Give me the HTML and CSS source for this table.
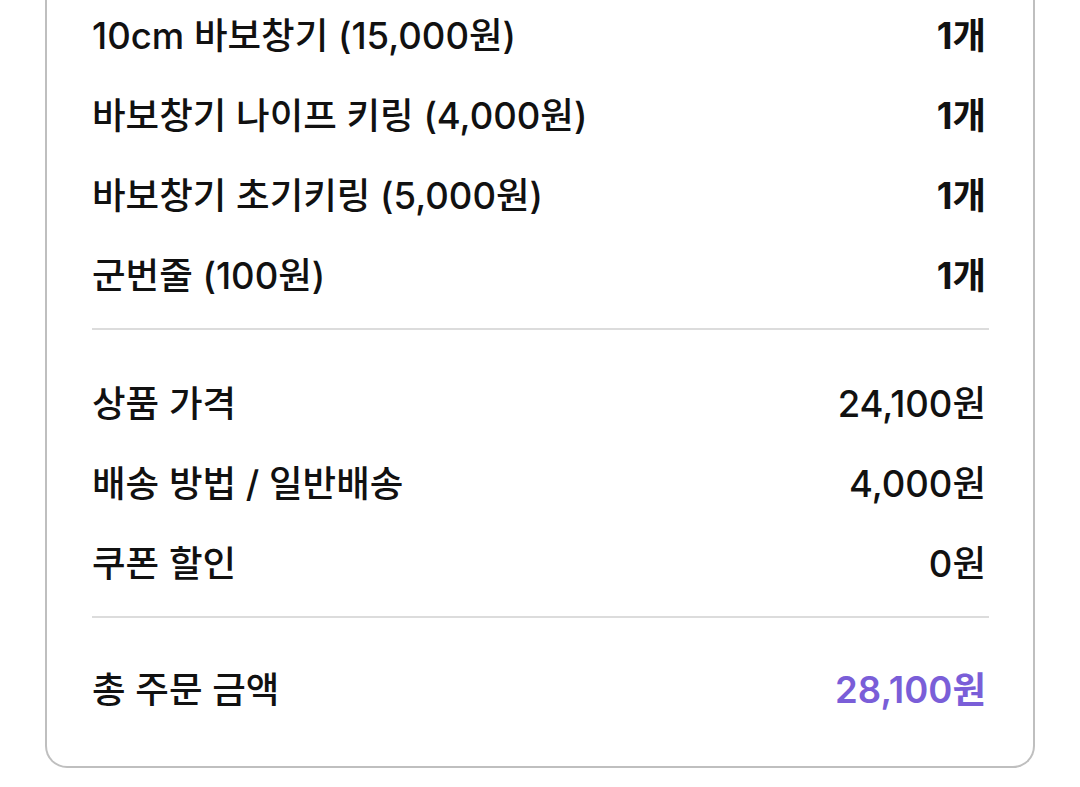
FILE: index.html
```html
<!DOCTYPE html>
<html lang="ko">
<head>
<meta charset="utf-8">
<link rel="stylesheet" href="styles.css">
</head>
<body>
<div class="page">
  <div class="card">
    <ul class="items">
      <li class="row"><span class="name">10cm 바보창기 (15,000원)</span><span class="qty">1개</span></li>
      <li class="row"><span class="name">바보창기 나이프 키링 (4,000원)</span><span class="qty">1개</span></li>
      <li class="row"><span class="name">바보창기 초기키링 (5,000원)</span><span class="qty">1개</span></li>
      <li class="row"><span class="name">군번줄 (100원)</span><span class="qty">1개</span></li>
    </ul>
    <hr class="divider">
    <ul class="summary">
      <li class="row"><span class="name">상품 가격</span><span class="value">24,100원</span></li>
      <li class="row"><span class="name">배송 방법 / 일반배송</span><span class="value">4,000원</span></li>
      <li class="row"><span class="name">쿠폰 할인</span><span class="value">0원</span></li>
    </ul>
    <hr class="divider">
    <div class="row total"><span class="name">총 주문 금액</span><span class="total-value">28,100원</span></div>
  </div>
</div>
</body>
</html>
```
FILE: styles.css
```css
html, body {
  margin: 0;
  padding: 0;
  background: #ffffff;
}
body {
  font-family: "Inter", "Noto Sans CJK KR", sans-serif;
  color: #111111;
  overflow: hidden;
}
.page {
  padding: 0 45px;
}
.card {
  margin-top: -4px;
  border: 2px solid #bfbfbf;
  border-top: none;
  border-radius: 0 0 22px 22px;
  padding: 0 47px 34px 45px;
  background: #fff;
}
.items, .summary {
  list-style: none;
  margin: 0;
  padding: 0;
}
.row {
  box-sizing: border-box;
  display: flex;
  justify-content: space-between;
  align-items: center;
  height: 80px;
  padding-bottom: 6px;
  font-size: 36.5px;
  letter-spacing: 0;
}
.total {
  padding-bottom: 10px;
}
.name {
  font-weight: 500;
}
.qty {
  font-weight: 700;
}
.value {
  font-weight: 500;
}
.divider {
  border: none;
  height: 2px;
  background: #dcdcdc;
  margin: 12px -3px 34px 0;
}
.total-value {
  font-weight: 600;
  color: #7a5ed8;
}
```
